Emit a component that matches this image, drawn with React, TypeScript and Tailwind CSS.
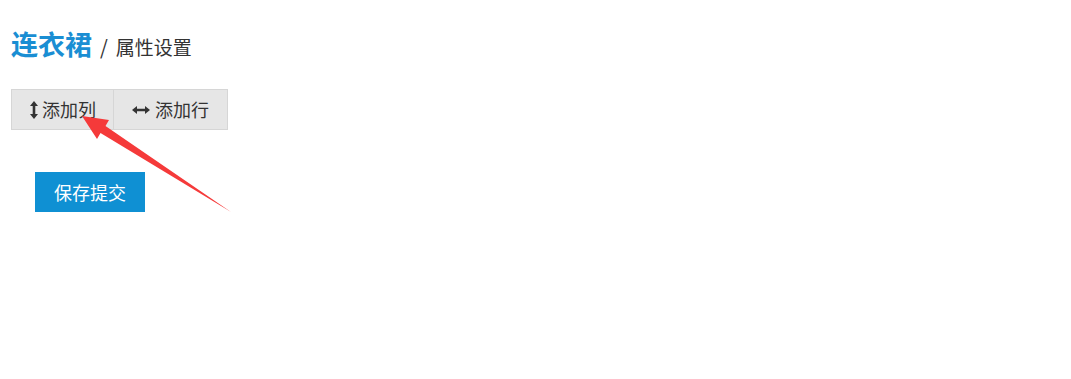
const font = "font-['Microsoft_YaHei','Noto_Sans_CJK_SC',sans-serif]";

const VArrow = () => (
  <svg width="8" height="18" viewBox="0 0 8 18" className="text-[#333]">
    <path d="M4 0 L8 5 H5.3 V13 H8 L4 18 L0 13 H2.7 V5 H0 Z" fill="currentColor" />
  </svg>
);

const HArrow = () => (
  <svg width="18" height="8" viewBox="0 0 18 8" className="text-[#333]">
    <path d="M0 4 L5 0 V2.7 H13 V0 L18 4 L13 8 V5.3 H5 V8 Z" fill="currentColor" />
  </svg>
);

export default function App() {
  return (
    <div className={`relative w-[1071px] h-[379px] bg-white px-[11px] pt-[27px] ${font}`}>
      <h1 className="flex items-baseline">
        <span className="text-[27px] font-bold text-[#1a8ed3] leading-[34px]">连衣裙</span>
        <span className="ml-[8px] text-[20px] text-[#333]">/</span>
        <span className="ml-[8px] text-[19px] text-[#333]">属性设置</span>
      </h1>

      <div className="mt-[27px] flex w-max">
        <button className="flex items-center gap-[4px] h-[41px] pl-[18px] pr-[17px] bg-[#e6e6e6] border border-[#d6d6d6] text-[18px] text-[#333]">
          <VArrow />
          添加列
        </button>
        <button className="flex items-center gap-[5px] h-[41px] pl-[18px] pr-[18px] bg-[#e6e6e6] border border-l-0 border-[#d6d6d6] text-[18px] text-[#333]">
          <HArrow />
          添加行
        </button>
      </div>

      <button className="mt-[42px] ml-[24px] w-[110px] h-[40px] bg-[#0f90d3] text-white text-[18px]">
        保存提交
      </button>

      {/* red annotation arrow */}
      <svg className="absolute left-0 top-0 pointer-events-none" width="1071" height="379">
        <polygon
          points="82,116 109,120 105.5,126 231,212 100.5,133 97,139"
          fill="#f53a3a"
        />
      </svg>
    </div>
  );
}
